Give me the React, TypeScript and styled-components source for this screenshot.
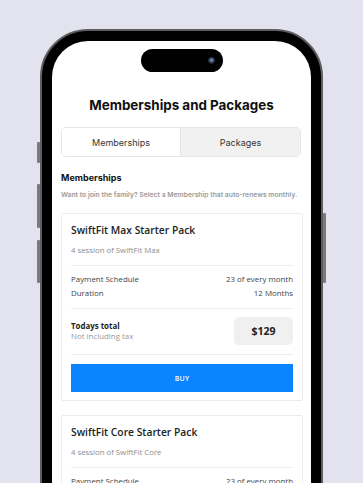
import React from "react";
import styled, { createGlobalStyle } from "styled-components";

const GlobalStyle = createGlobalStyle`
  html, body {
    margin: 0;
    padding: 0;
    background: #e3e3f0;
    overflow: hidden;
    height: 483px;
  }
`;

const Stage = styled.div({
  paddingTop: 29,
  paddingLeft: 40,
  height: 483,
  boxSizing: "border-box",
});

const Phone = styled.div({
  position: "relative",
  width: 283,
  height: 520,
  boxSizing: "border-box",
  background: "#000",
  borderRadius: 48,
  border: "2px solid #5e5e60",
  padding: "10px 10px 0 10px",
});

const SideButton = styled.div<{ $side: "left" | "right"; $top: number; $h: number }>`
  position: absolute;
  ${(p) => (p.$side === "left" ? "left: -5px;" : "right: -5px;")}
  top: ${(p) => p.$top}px;
  height: ${(p) => p.$h}px;
  width: 3px;
  background: #7a7a7c;
  border-radius: 1px;
`;

const Screen = styled.div({
  background: "#fff",
  height: "100%",
  borderRadius: "36px 36px 0 0",
  padding: "8px 9px 0 9px",
  boxSizing: "border-box",
  overflow: "hidden",
  fontFamily: "Inter, 'Liberation Sans', sans-serif",
  color: "#111",
});

const Island = styled.div({
  margin: "0 auto",
  width: 82,
  height: 23,
  borderRadius: 12,
  background: "#000",
  display: "flex",
  alignItems: "center",
  justifyContent: "flex-end",
  paddingRight: 8,
  boxSizing: "border-box",
});

const Camera = styled.div({
  width: 7,
  height: 7,
  borderRadius: "50%",
  background: "radial-gradient(circle at 50% 45%, #8ea2c4 0, #3b4a66 40%, #0d1220 75%)",
});

const Title = styled.h1({
  margin: "24px 0 0",
  fontSize: 13.4,
  lineHeight: "18px",
  fontWeight: 700,
  textAlign: "center",
});

const Tabs = styled.div({
  marginTop: 13,
  display: "grid",
  gridTemplateColumns: "119px 1fr",
  height: 30,
  border: "1px solid #e6e6e6",
  borderRadius: 5,
  overflow: "hidden",
  boxSizing: "border-box",
  marginRight: 1,
});

const Tab = styled.div<{ $active?: boolean }>`
  display: flex;
  align-items: center;
  justify-content: center;
  font-size: 9px;
  color: #333;
  background: ${(p) => (p.$active ? "#fff" : "#f1f1f1")};
  ${(p) => (p.$active ? "border-right: 1px solid #e6e6e6;" : "")}
`;

const SectionHeading = styled.h2({
  margin: "15px 0 0",
  fontSize: 9,
  lineHeight: "12px",
  fontWeight: 700,
});

const SectionNote = styled.p({
  margin: "6px 0 0",
  fontSize: 6.8,
  lineHeight: "9px",
  fontWeight: 600,
  color: "#9a9a9a",
  whiteSpace: "nowrap",
});

const Card = styled.div({
  marginTop: 14,
  marginRight: -1,
  border: "1px solid #ececec",
  borderRadius: 2,
  padding: "9px 9px 8px",
  fontFamily: "'Open Sans', 'Liberation Sans', sans-serif",
});

const CardTitle = styled.div({
  fontSize: 10.3,
  lineHeight: "14px",
  fontWeight: 600,
  color: "#222",
});

const CardSub = styled.div({
  marginTop: 8,
  fontSize: 7.8,
  lineHeight: "10px",
  color: "#8c8c8c",
});

const Divider = styled.div<{ $gap: number }>`
  height: 1px;
  background: #ececec;
  margin-top: ${(p) => p.$gap}px;
`;

const Rows = styled.div({
  padding: "8px 0 10px",
  display: "flex",
  flexDirection: "column",
  gap: 4,
});

const Row = styled.div({
  display: "flex",
  justifyContent: "space-between",
  fontSize: 7.9,
  lineHeight: "10px",
  color: "#444",
});

const Total = styled.div({
  padding: "8px 0 9px",
  display: "flex",
  justifyContent: "space-between",
  alignItems: "center",
});

const TotalLabel = styled.div({
  display: "flex",
  flexDirection: "column",
  fontSize: 7.9,
  lineHeight: "10px",
});

const Strong = styled.span({
  fontWeight: 700,
  color: "#222",
});

const Muted = styled.span({
  color: "#9a9a9a",
});

const Price = styled.div({
  width: 59,
  height: 28,
  borderRadius: 5,
  background: "#f0f0f0",
  display: "flex",
  alignItems: "center",
  justifyContent: "center",
  fontSize: 10.5,
  fontWeight: 700,
  color: "#222",
});

const BuyButton = styled.button({
  display: "block",
  width: "100%",
  marginTop: 9,
  height: 28,
  border: "none",
  background: "#0a84ff",
  color: "#fff",
  fontFamily: "'Open Sans', 'Liberation Sans', sans-serif",
  fontSize: 7,
  fontWeight: 600,
  letterSpacing: 0.2,
  padding: 0,
});

interface Pack {
  name: string;
  sub: string;
  price: string;
}

const packs: Pack[] = [
  { name: "SwiftFit Max Starter Pack", sub: "4 session of SwiftFit Max", price: "$129" },
  { name: "SwiftFit Core Starter Pack", sub: "4 session of SwiftFit Core", price: "$99" },
];

const PackCard = ({ pack }: { pack: Pack }) => (
  <Card>
    <CardTitle>{pack.name}</CardTitle>
    <CardSub>{pack.sub}</CardSub>
    <Divider $gap={10} />
    <Rows>
      <Row>
        <span>Payment Schedule</span>
        <span>23 of every month</span>
      </Row>
      <Row>
        <span>Duration</span>
        <span>12 Months</span>
      </Row>
    </Rows>
    <Divider $gap={0} />
    <Total>
      <TotalLabel>
        <Strong>Todays total</Strong>
        <Muted>Not including tax</Muted>
      </TotalLabel>
      <Price>{pack.price}</Price>
    </Total>
    <Divider $gap={0} />
    <BuyButton>BUY</BuyButton>
  </Card>
);

export default function App() {
  return (
    <>
      <GlobalStyle />
      <Stage>
        <Phone>
          <SideButton $side="left" $top={111} $h={21} />
          <SideButton $side="left" $top={153} $h={44} />
          <SideButton $side="left" $top={209} $h={43} />
          <SideButton $side="right" $top={182} $h={70} />
          <Screen>
            <Island>
              <Camera />
            </Island>
            <Title>Memberships and Packages</Title>
            <Tabs>
              <Tab $active>Memberships</Tab>
              <Tab>Packages</Tab>
            </Tabs>
            <SectionHeading>Memberships</SectionHeading>
            <SectionNote>
              Want to join the family? Select a Membership that auto-renews monthly.
            </SectionNote>
            {packs.map((p) => (
              <PackCard key={p.name} pack={p} />
            ))}
          </Screen>
        </Phone>
      </Stage>
    </>
  );
}
